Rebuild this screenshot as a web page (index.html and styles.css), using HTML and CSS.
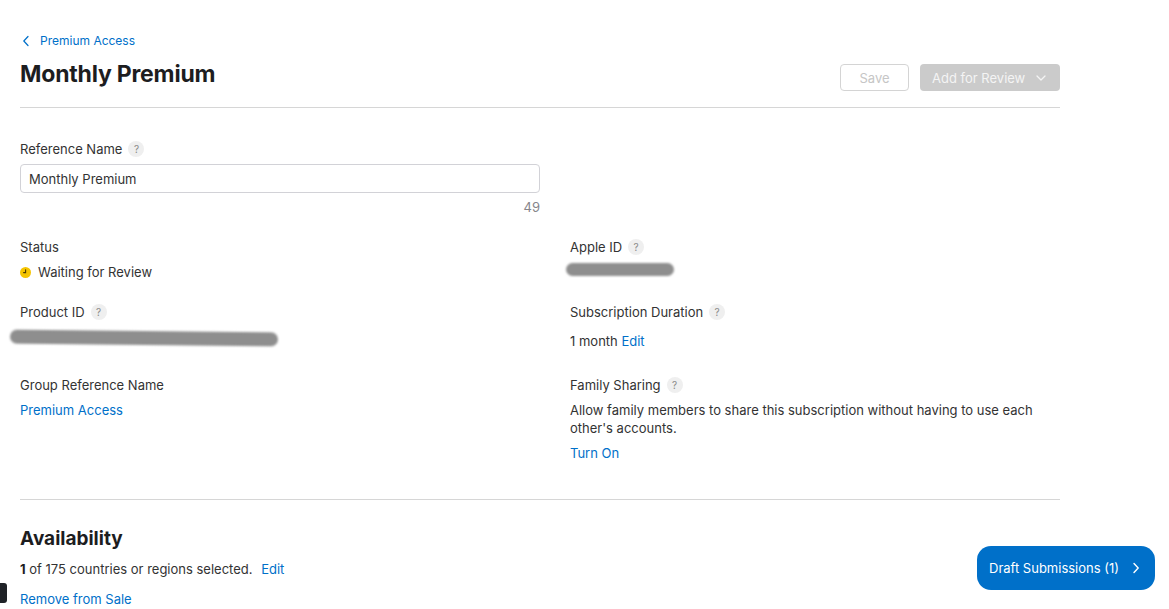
FILE: index.html
```html
<!DOCTYPE html>
<html lang="en">
<head>
  <meta charset="UTF-8" />
  <meta name="viewport" content="width=device-width, initial-scale=1" />
  <title>Monthly Premium</title>
  <link rel="stylesheet" href="styles.css">
</head>
<body>

  <div class="page">
    <a class="crumb" href="#">
      <svg class="crumb-icon" width="8" height="12" viewBox="0 0 8 12"><path d="M6 1.5L1.8 6L6 10.5" fill="none" stroke="#0070c9" stroke-width="1.2" stroke-linecap="round" stroke-linejoin="round"/></svg>
      Premium Access
    </a>

    <div class="header">
      <h1 class="title">Monthly Premium</h1>
      <div class="actions">
        <button class="btn btn-save" disabled>Save</button>
        <button class="btn btn-review" disabled>
          Add for Review
          <svg width="10" height="6" viewBox="0 0 10 6"><path d="M1 1L5 5L9 1" fill="none" stroke="#f4f4f4" stroke-width="1.3" stroke-linecap="round" stroke-linejoin="round"/></svg>
        </button>
      </div>
    </div>

    <div class="ref-name">
      <div class="label">Reference Name <span class="help">?</span></div>
      <input class="text-input" type="text" value="Monthly Premium" />
      <div class="counter">49</div>
    </div>

    <div class="fields">
      <div class="field">
        <div class="label">Status</div>
        <div class="value">
          <svg class="status-dot" width="11" height="11" viewBox="0 0 11 11"><circle cx="5.5" cy="5.5" r="5.5" fill="#f5c400"/><path d="M5.6 2.8V5.6H3.6" fill="none" stroke="#4a3a00" stroke-width="1.1" stroke-linecap="round"/></svg>Waiting for Review
        </div>
      </div>
      <div class="field">
        <div class="label">Apple ID <span class="help">?</span></div>
        <div class="value"><span class="redacted redacted-short"></span></div>
      </div>

      <div class="field">
        <div class="label">Product ID <span class="help">?</span></div>
        <div class="value value-pad"><span class="redacted redacted-long"></span></div>
      </div>
      <div class="field">
        <div class="label">Subscription Duration <span class="help">?</span></div>
        <div class="value value-pad">1 month <a class="link" href="#">Edit</a></div>
      </div>

      <div class="field">
        <div class="label">Group Reference Name</div>
        <div class="value"><a class="link" href="#">Premium Access</a></div>
      </div>
      <div class="field">
        <div class="label">Family Sharing <span class="help">?</span></div>
        <div class="value">Allow family members to share this subscription without having to use each other's accounts.</div>
        <a class="link turn-on" href="#">Turn On</a>
      </div>
    </div>

    <div class="availability">
      <h2 class="section-title">Availability</h2>
      <p class="avail-line"><b>1</b> of 175 countries or regions selected. <a class="link edit-gap" href="#">Edit</a></p>
      <a class="link" href="#">Remove from Sale</a>
    </div>
  </div>

  <div class="side-tab"></div>

  <a class="drafts" href="#">
    Draft Submissions (1)
    <svg width="8" height="12" viewBox="0 0 8 12"><path d="M2 1.5L6.2 6L2 10.5" fill="none" stroke="#fff" stroke-width="1.4" stroke-linecap="round" stroke-linejoin="round"/></svg>
  </a>

</body>
</html>
```

FILE: styles.css
```css
body { margin: 0; background: #fff; color: #333; font-family: Inter, "Noto Sans", sans-serif; font-size: 13px; line-height: 18px; }
a { text-decoration: none; }
.page { width: 1040px; padding: 33px 20px 0; }

.crumb { display: flex; align-items: center; gap: 10px; height: 16px; font-size: 12px; color: #0070c9; }
.crumb-icon { margin-left: 2px; }

.header { display: flex; justify-content: space-between; align-items: flex-start; margin-top: 11px; padding-bottom: 16px; border-bottom: 1px solid #d6d6d6; }
.title { margin: 0; font-size: 23px; line-height: 28px; font-weight: 700; color: #1d1d1f; letter-spacing: -0.2px; }
.actions { display: flex; gap: 11px; margin-top: 4px; }
.btn { height: 27px; border-radius: 4px; font-family: inherit; font-size: 13px; padding: 0 14px; }
.btn-save { width: 69px; background: #fff; border: 1px solid #d4d4d4; color: #c6c6c6; }
.btn-review { width: 140px; display: flex; align-items: center; justify-content: space-between; padding: 0 14px 0 12px; background: #cbcbcb; border: none; color: #f4f4f4; }

.ref-name { padding-top: 32px; width: 520px; }
.label { display: flex; align-items: center; gap: 6px; color: #333; }
.help { display: inline-flex; align-items: center; justify-content: center; width: 16px; height: 16px; border-radius: 50%; background: #efefef; color: #8a8a8a; font-size: 10px; line-height: 1; }
.text-input { display: block; box-sizing: border-box; width: 100%; height: 29px; margin-top: 6px; padding: 0 8px; border: 1px solid #d2d2d7; border-radius: 4px; font-family: inherit; font-size: 13px; color: #333; }
.counter { margin-top: 6px; line-height: 16px; text-align: right; color: #86868b; }

.fields { display: grid; grid-template-columns: 550px 490px; row-gap: 22px; margin-top: 23px; }
.value { margin-top: 7px; }
.value-pad { padding: 4px 0; }
.status-dot { margin-right: 7px; vertical-align: -1px; }
.link { color: #0070c9; }
.turn-on { display: inline-block; margin-top: 7px; }

.redacted { display: block; background: #8e8e8e; border-radius: 8px; filter: blur(1px); }
.redacted-short { width: 108px; height: 13px; margin: 2px 0 0 -4px; }
.redacted-long { width: 268px; height: 14px; margin: -1px 0 0 -10px; transform: rotate(0.6deg); }

.availability { margin-top: 37px; padding-top: 27px; border-top: 1px solid #d6d6d6; }
.section-title { margin: 0; font-size: 19px; line-height: 24px; font-weight: 700; color: #1d1d1f; }
.avail-line { margin: 9px 0 12px; }
.avail-line b { color: #1d1d1f; }
.edit-gap { margin-left: 5px; }

.side-tab { position: fixed; left: -3px; bottom: 6px; width: 10px; height: 20px; border-radius: 3px; background: #1f2227; }

.drafts { position: fixed; right: 14px; bottom: 19px; box-sizing: border-box; width: 178px; height: 44px; display: flex; align-items: center; justify-content: space-between; padding: 0 15px 0 12px; border-radius: 14px; background: #0070c9; color: #fff; font-size: 13px; }
```
